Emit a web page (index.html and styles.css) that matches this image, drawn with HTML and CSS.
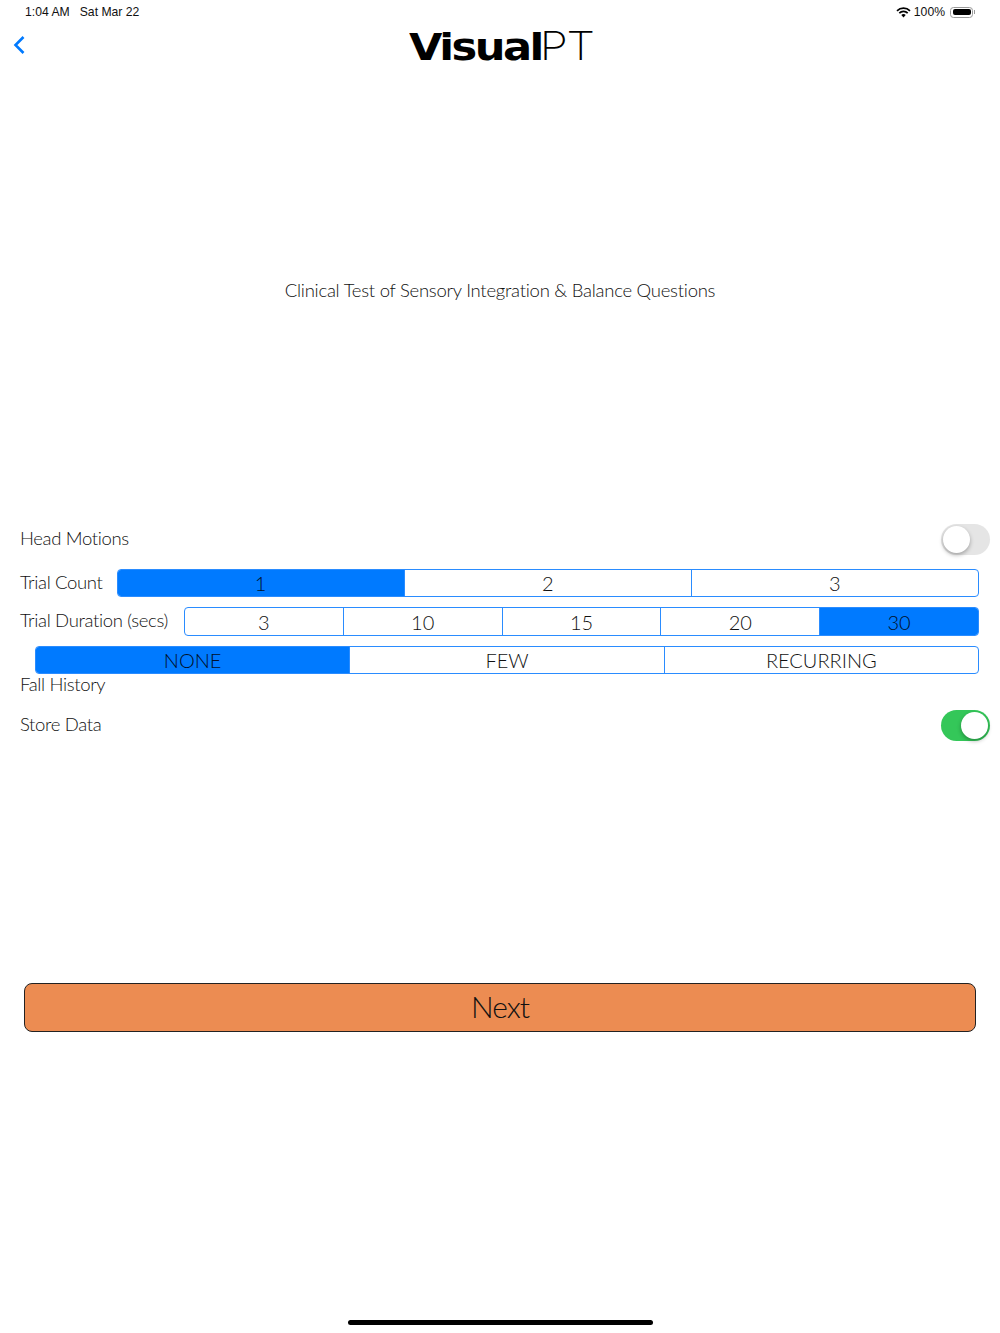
FILE: index.html
```html
<!DOCTYPE html>
<html lang="en">
    <head>
        <meta charset="UTF-8" />
        <meta name="viewport" content="width=device-width, initial-scale=1.0" />
        <title>VisualPT</title>
        <link rel="stylesheet" href="styles.css">
    </head>
    <body>
        <div class="status">
            <div class="status-left">
                <span>1:04 AM</span>
                <span>Sat Mar 22</span>
            </div>
            <div class="status-right">
                <svg class="wifi" width="15" height="11" viewBox="0 0 15 11">
                    <path d="M1 3.9a9.2 9.2 0 0 1 13 0" fill="none" stroke="#000" stroke-width="1.7"/>
                    <path d="M3.3 6.2a5.9 5.9 0 0 1 8.4 0" fill="none" stroke="#000" stroke-width="1.7"/>
                    <path d="M5.3 8.1a2.9 2.9 0 0 1 4.4 0L7.5 10.6z" fill="#000"/>
                </svg>
                <span>100%</span>
                <div class="battery"><div class="battery-fill"></div></div>
                <div class="battery-tip"></div>
            </div>
        </div>

        <div class="nav">
            <svg class="back" width="12" height="20" viewBox="0 0 12 20">
                <path d="M10.5 2 2.5 10l8 8" fill="none" stroke="#007aff" stroke-width="2.6"/>
            </svg>
            <div class="logo"><b>Visual</b><span>PT</span></div>
        </div>

        <div class="title">Clinical Test of Sensory Integration &amp; Balance Questions</div>

        <div class="form">
            <div class="row row-switch">
                <div class="label">Head Motions</div>
                <div class="switch"><div class="knob"></div></div>
            </div>
            <div class="row row-count">
                <div class="label">Trial Count</div>
                <ol class="seg">
                    <li class="active">1</li>
                    <li>2</li>
                    <li>3</li>
                </ol>
            </div>
            <div class="row row-duration">
                <div class="label">Trial Duration (secs)</div>
                <ol class="seg">
                    <li>3</li>
                    <li>10</li>
                    <li>15</li>
                    <li>20</li>
                    <li class="active">30</li>
                </ol>
            </div>
            <ol class="seg seg-fall">
                <li class="active">NONE</li>
                <li>FEW</li>
                <li>RECURRING</li>
            </ol>
            <div class="label label-fall">Fall History</div>
            <div class="row row-switch row-store">
                <div class="label">Store Data</div>
                <div class="switch switch-on"><div class="knob"></div></div>
            </div>
        </div>

        <div class="next">Next</div>
        <div class="home"></div>
    </body>
</html>
```

FILE: styles.css
```css
* {
    margin: 0;
    padding: 0;
    box-sizing: border-box;
}
ol {
    list-style: none;
}
body {
    width: 1000px;
    height: 1333px;
    background-color: white;
    color: #111;
    font-family: "Lato", "Liberation Sans", sans-serif;
    font-weight: 300;
    overflow: hidden;
}

.status {
    display: flex;
    justify-content: space-between;
    height: 24px;
    padding: 0 25px;
    align-items: center;
    color: #111;
    font-family: "Liberation Sans", sans-serif;
    font-weight: 400;
    font-size: 12.2px;
}
.status-left {
    display: flex;
    gap: 10px;
}
.status-right {
    display: flex;
    align-items: center;
}
.wifi {
    margin-right: 3px;
}
.battery {
    width: 23px;
    height: 11px;
    margin-left: 5px;
    padding: 1.5px;
    border: 1px solid #999;
    border-radius: 3.5px;
}
.battery-fill {
    height: 100%;
    background-color: black;
    border-radius: 2px;
}
.battery-tip {
    width: 1px;
    height: 4px;
    margin-left: 1px;
    background-color: #999;
}

.nav {
    display: flex;
    align-items: center;
    height: 42px;
    padding-left: 13px;
    position: relative;
}
.logo {
    position: absolute;
    top: 0;
    left: 409px;
    line-height: 42px;
    font-size: 40px;
    color: black;
    white-space: nowrap;
    transform: scaleX(1.137);
    transform-origin: left center;
}
.logo b {
    font-family: "DejaVu Sans", sans-serif;
    font-weight: 700;
    font-size: 38px;
    letter-spacing: -2.2px;
}
.logo span {
    margin-left: -2px;
    font-family: "Inter", sans-serif;
    font-weight: 200;
    letter-spacing: -1px;
}

.title {
    margin-top: 211px;
    height: 26px;
    line-height: 26px;
    text-align: center;
    font-size: 18.5px;
    letter-spacing: -0.26px;
}

.form {
    margin-top: 221px;
    padding: 0 10px 0 20px;
}
.row {
    display: flex;
    align-items: center;
}
.label {
    margin-bottom: 3px;
    font-size: 18.5px;
    letter-spacing: -0.35px;
    white-space: nowrap;
}
.row-switch {
    justify-content: space-between;
    height: 31px;
}
.row-count {
    margin-top: 14px;
    padding-right: 11px;
    height: 28px;
    gap: 14px;
}
.row-duration {
    margin-top: 10px;
    padding-right: 11px;
    height: 29px;
    gap: 16px;
}
.seg {
    display: flex;
    flex: 1;
    height: 100%;
    border: 1px solid #2a8cff;
    border-radius: 4px;
    overflow: hidden;
    font-size: 20px;
    color: #111;
}
.seg li {
    flex: 1;
    display: flex;
    align-items: center;
    justify-content: center;
    border-left: 1px solid #2a8cff;
}
.seg li:first-child {
    border-left: 0;
}
.seg .active {
    background-color: #007aff;
    color: #001029;
}
.seg-fall {
    flex: none;
    height: 28px;
    margin: 10px 11px 0 15px;
}
.label-fall {
    height: 20px;
    line-height: 20px;
}
.row-store {
    margin-top: 16px;
}

.switch {
    width: 49px;
    height: 31px;
    padding: 2px;
    background-color: #e5e5e5;
    border-radius: 16px;
}
.knob {
    width: 27px;
    height: 27px;
    background-color: white;
    border-radius: 50%;
    box-shadow: 0 2px 4px rgba(0, 0, 0, 0.3);
}
.switch-on {
    display: flex;
    justify-content: flex-end;
    background-color: #34c759;
}

.next {
    height: 49px;
    margin: 242px 24px 0;
    border: 1px solid #222;
    border-radius: 8px;
    background-color: #ec8c52;
    color: #111;
    text-align: center;
    line-height: 44px;
    font-size: 30px;
    letter-spacing: -1px;
}

.home {
    width: 305px;
    height: 5px;
    margin: 288px auto 0;
    background-color: black;
    border-radius: 3px;
}
```
